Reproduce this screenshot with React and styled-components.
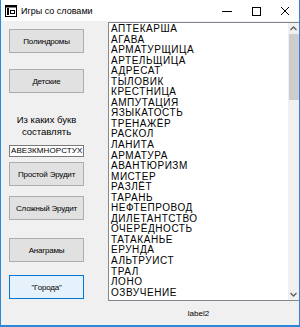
import styled, { createGlobalStyle } from "styled-components"

const GlobalStyle = createGlobalStyle`
  html, body {
    margin: 0;
    padding: 0;
    background: #ffffff;
  }
  * {
    box-sizing: border-box;
  }
`

const Window = styled.div`
  width: 300px;
  height: 327px;
  display: flex;
  flex-direction: column;
  border-left: 1px solid #2b88d8;
  border-right: 1px solid #2b88d8;
  border-bottom: 2px solid #2b88d8;
  font-family: "Liberation Sans", Arial, sans-serif;
  overflow: hidden;
`

const TitleBar = styled.div`
  height: 21px;
  flex: none;
  display: flex;
  align-items: center;
  background: #ffffff;
  padding-left: 4px;
`

const Title = styled.span`
  font-size: 9px;
  color: #000;
  margin-left: 4px;
  margin-top: 1px;
`

const Controls = styled.div`
  margin-left: auto;
  display: flex;
  height: 100%;
`

const Ctrl = styled.div`
  width: 29px;
  height: 100%;
  display: flex;
  align-items: center;
  justify-content: center;
`

const Client = styled.div`
  flex: 1;
  display: flex;
  background: #f0f0f0;
  min-height: 0;
`

const LeftPanel = styled.div`
  width: 107px;
  flex: none;
  display: flex;
  flex-direction: column;
  padding-left: 8px;
`

const Button = styled.div`
  width: 75px;
  height: 24px;
  margin-top: ${(p) => p.$mt}px;
  display: flex;
  align-items: center;
  justify-content: center;
  font-size: 8px;
  letter-spacing: -0.2px;
  color: #000;
  background: ${(p) => (p.$focus ? "#e5f1fb" : "#e1e1e1")};
  border: 1px solid ${(p) => (p.$focus ? "#0078d7" : "#adadad")};
`

const Caption = styled.div`
  width: 75px;
  margin-top: 21px;
  text-align: center;
  font-size: 9.5px;
  line-height: 12px;
  color: #000;
`

const Input = styled.div`
  width: 75px;
  height: 12px;
  margin-top: 7px;
  background: #fff;
  border: 1px solid #7a7a7a;
  font-size: 8px;
  line-height: 10px;
  padding-left: 1px;
  letter-spacing: 0.1px;
  color: #000;
  white-space: nowrap;
  overflow: hidden;
`

const RightPanel = styled.div`
  flex: 1;
  display: flex;
  flex-direction: column;
  min-width: 0;
`

const ListBox = styled.div`
  margin-top: 1px;
  height: 279px;
  display: flex;
  background: #fff;
  border: 1px solid #828790;
  border-right: none;
`

const Items = styled.div`
  flex: 1;
  padding: 1px 0 0 2px;
  overflow: hidden;
`

const Item = styled.div`
  font-size: 10px;
  line-height: 10.55px;
  letter-spacing: 0.55px;
  color: #000;
  white-space: nowrap;
`

const ScrollBar = styled.div`
  width: 11px;
  flex: none;
  display: flex;
  flex-direction: column;
  background: #f0f0f0;
`

const Arrow = styled.div`
  height: 11px;
  display: flex;
  align-items: center;
  justify-content: center;
`

const Track = styled.div`
  flex: 1;
  display: flex;
  flex-direction: column;
`

const Thumb = styled.div`
  height: 66px;
  background: #cdcdcd;
  margin: 0 0 0 1px;
`

const StatusLabel = styled.div`
  flex: 1;
  display: flex;
  align-items: center;
  justify-content: center;
  font-size: 8px;
  color: #000;
  padding-right: 10px;
`

const words = [
  "АПТЕКАРША", "АГАВА", "АРМАТУРЩИЦА", "АРТЕЛЬЩИЦА", "АДРЕСАТ", "ТЫЛОВИК",
  "КРЕСТНИЦА", "АМПУТАЦИЯ", "ЯЗЫКАТОСТЬ", "ТРЕНАЖЁР", "РАСКОЛ", "ЛАНИТА",
  "АРМАТУРА", "АВАНТЮРИЗМ", "МИСТЕР", "РАЗЛЁТ", "ТАРАНЬ", "НЕФТЕПРОВОД",
  "ДИЛЕТАНТСТВО", "ОЧЕРЁДНОСТЬ", "ТАТАКАНЬЕ", "ЕРУНДА", "АЛЬТРУИСТ", "ТРАЛ",
  "ЛОНО", "ОЗВУЧЕНИЕ",
]

const AppIcon = () => (
  <svg width="12" height="12" viewBox="0 0 12 12">
    <rect x="0.5" y="0.5" width="11" height="11" fill="none" stroke="#000" />
    <rect x="0.5" y="0.5" width="11" height="2" fill="#000" />
    <rect x="2" y="3" width="2" height="7" fill="#000" />
    <rect x="5.5" y="5.5" width="4" height="3" fill="none" stroke="#000" />
  </svg>
)

const App = () => {
  return (
    <>
      <GlobalStyle />
      <Window>
        <TitleBar>
          <AppIcon />
          <Title>Игры со словами</Title>
          <Controls>
            <Ctrl>
              <svg width="10" height="10" viewBox="0 0 10 10">
                <line x1="0" y1="5.5" x2="10" y2="5.5" stroke="#000" />
              </svg>
            </Ctrl>
            <Ctrl>
              <svg width="10" height="10" viewBox="0 0 10 10">
                <rect x="1.5" y="1.5" width="8" height="8" fill="none" stroke="#000" />
              </svg>
            </Ctrl>
            <Ctrl>
              <svg width="10" height="10" viewBox="0 0 10 10">
                <path d="M1 1 L9 9 M9 1 L1 9" stroke="#000" strokeWidth="1" />
              </svg>
            </Ctrl>
          </Controls>
        </TitleBar>
        <Client>
          <LeftPanel>
            <Button $mt={8}>Полиндромы</Button>
            <Button $mt={16}>Детские</Button>
            <Caption>
              Из каких букв
              <br />
              составлять
            </Caption>
            <Input>АВЕЗКМНОРСТУХ</Input>
            <Button $mt={5}>Простой Эрудит</Button>
            <Button $mt={10}>Сложный Эрудит</Button>
            <Button $mt={18}>Анаграмы</Button>
            <Button $mt={13} $focus>"Города"</Button>
          </LeftPanel>
          <RightPanel>
            <ListBox>
              <Items>
                {words.map((w) => (
                  <Item key={w}>{w}</Item>
                ))}
              </Items>
              <ScrollBar>
                <Arrow>
                  <svg width="7" height="5" viewBox="0 0 7 5">
                    <path d="M0.5 4 L3.5 1 L6.5 4" fill="none" stroke="#606060" strokeWidth="1.3" />
                  </svg>
                </Arrow>
                <Track>
                  <Thumb />
                </Track>
                <Arrow>
                  <svg width="7" height="5" viewBox="0 0 7 5">
                    <path d="M0.5 1 L3.5 4 L6.5 1" fill="none" stroke="#606060" strokeWidth="1.3" />
                  </svg>
                </Arrow>
              </ScrollBar>
            </ListBox>
            <StatusLabel>label2</StatusLabel>
          </RightPanel>
        </Client>
      </Window>
    </>
  )
}

export default App
